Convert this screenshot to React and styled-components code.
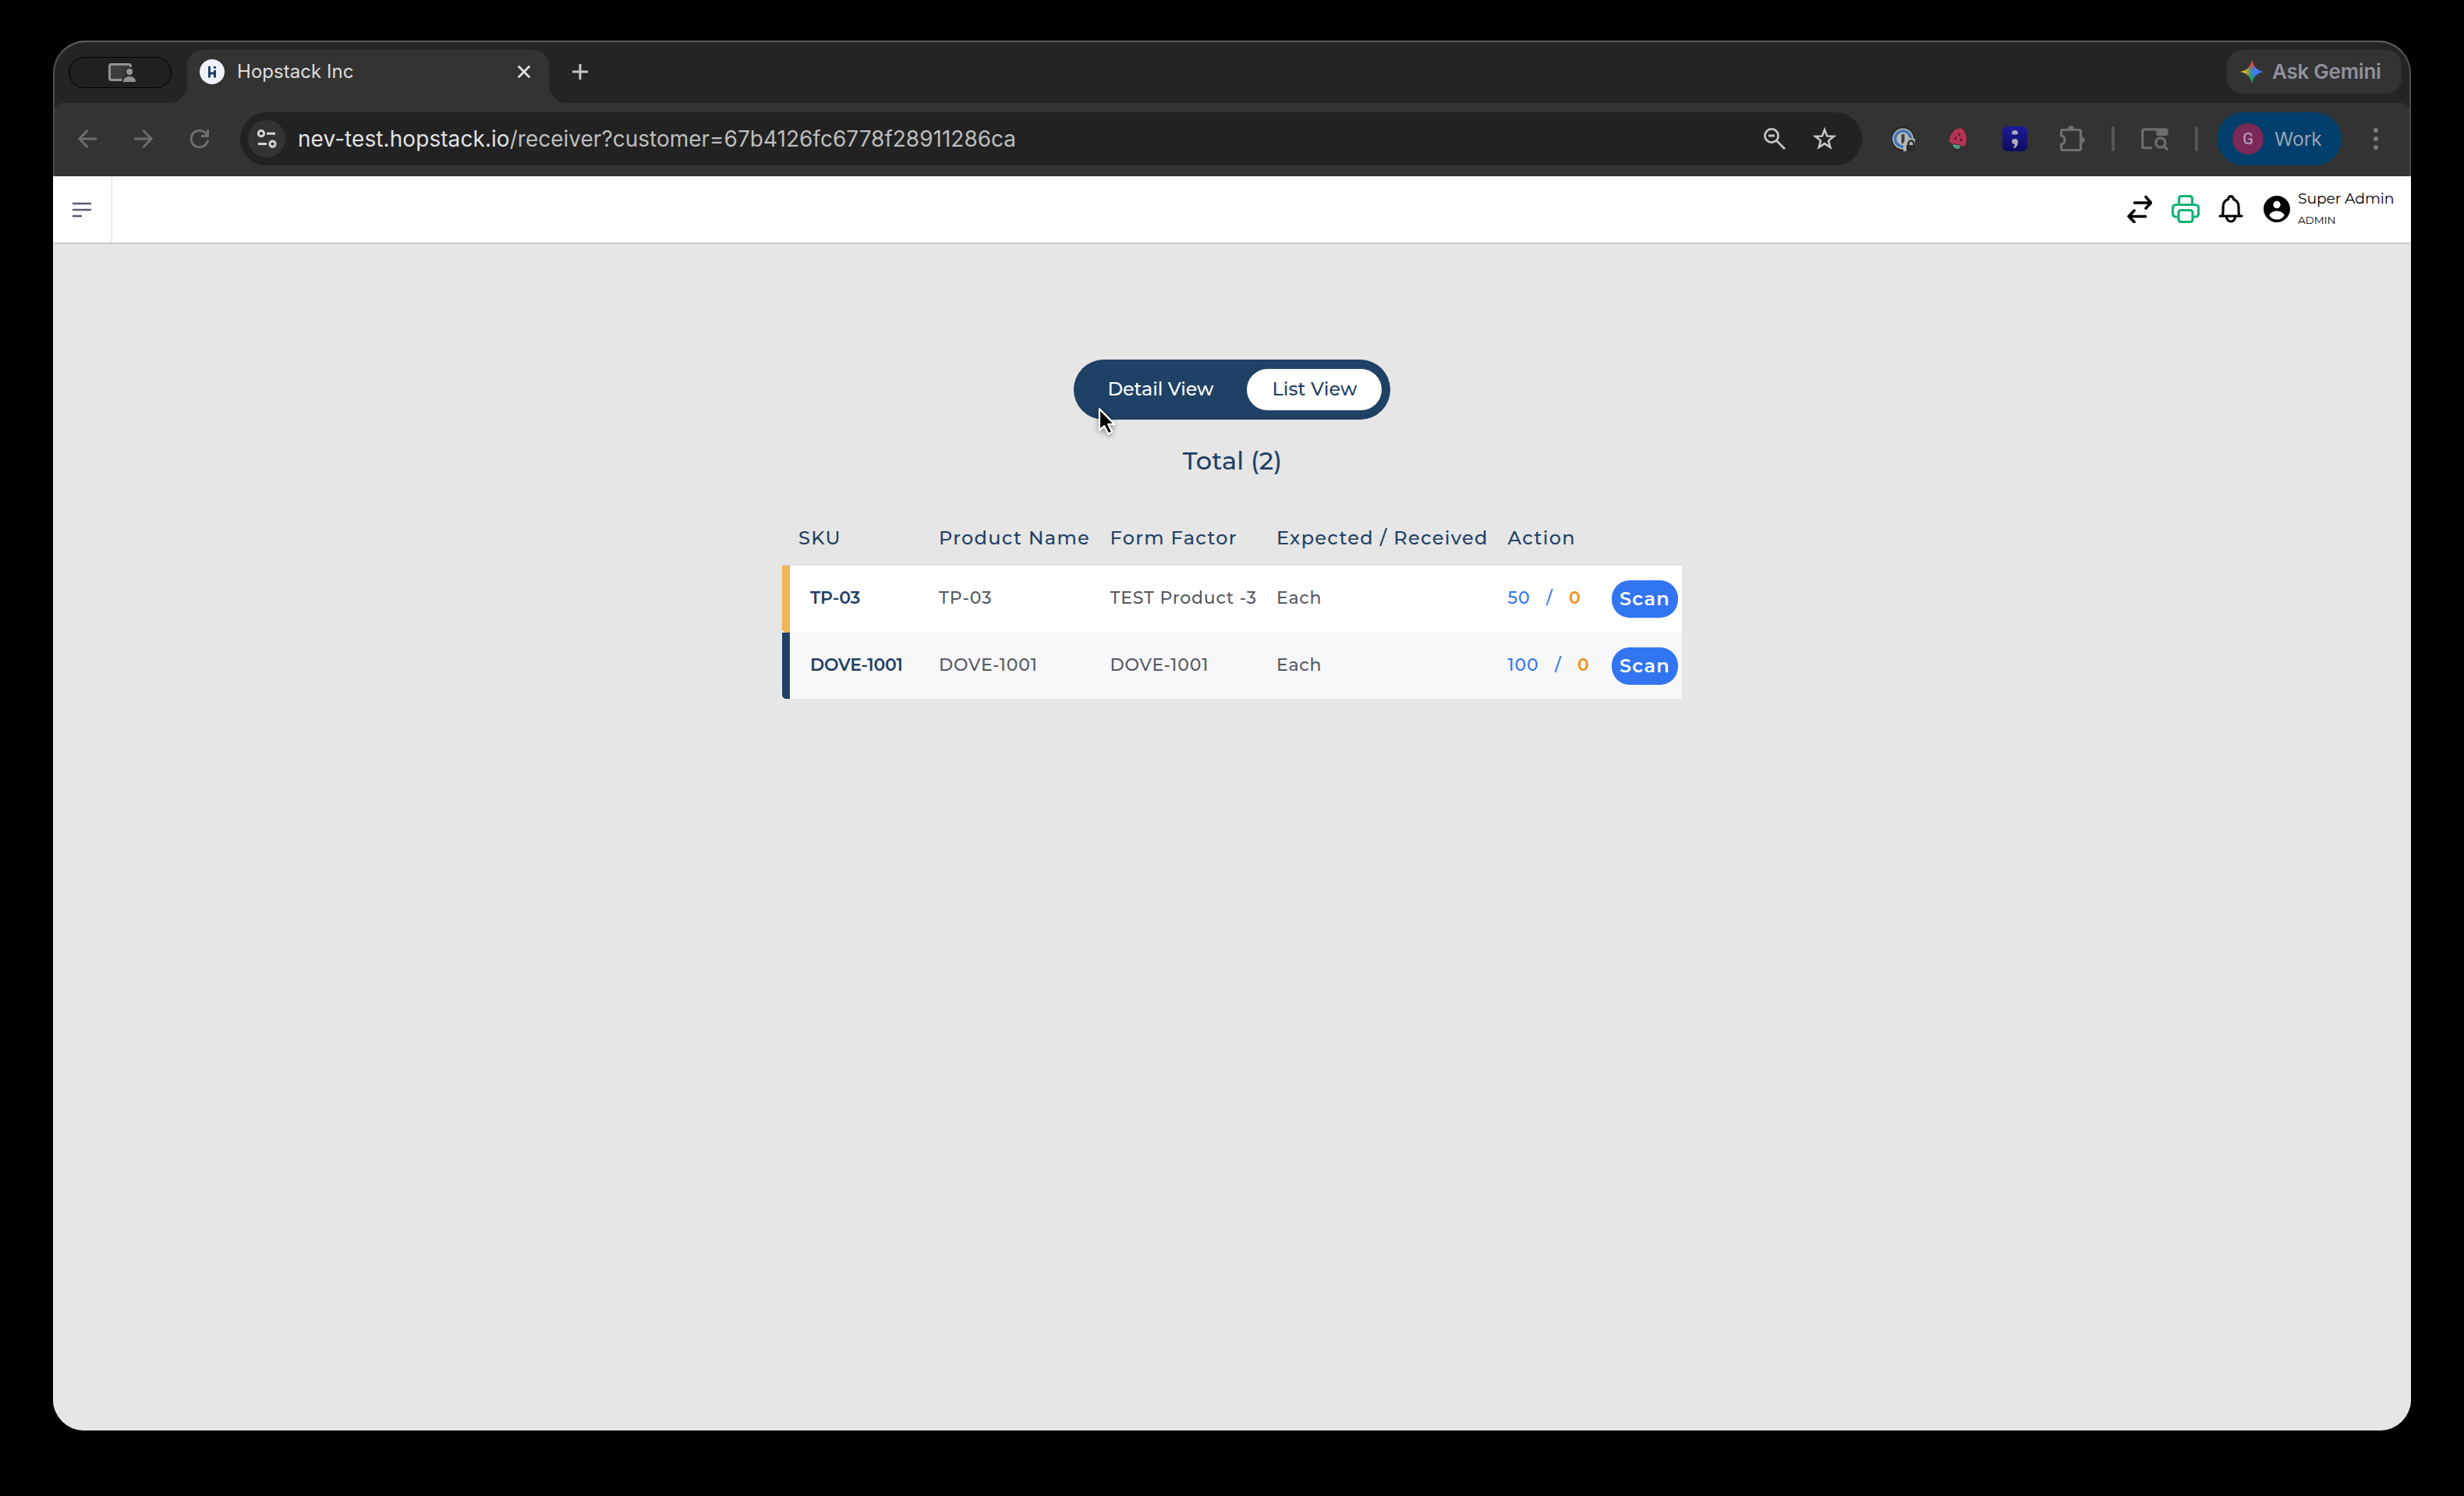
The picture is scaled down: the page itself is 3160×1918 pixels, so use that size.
import React from "react";
import styled, { createGlobalStyle } from "styled-components";

const Global = createGlobalStyle`
  * { box-sizing: border-box; }
  html, body { margin: 0; background: #000; }
  svg { display: block; flex: none; }
`;

const UI = `Inter, "Liberation Sans", sans-serif`;
const BRAND = `Montserrat, Inter, sans-serif`;

/* ---------- window ---------- */
const Desktop = styled.div`
  width: 3160px;
  height: 1918px;
  padding: 52px 68px 84px;
  background: #000;
  overflow: hidden;
`;
const Window = styled.div`
  height: 1782px;
  display: flex;
  flex-direction: column;
  border-radius: 42px 42px 40px 40px;
  overflow: hidden;
  background: #e6e6e6;
`;
const Chrome = styled.div`
  position: relative;
  height: 174px;
  flex: none;
  background: #242424;
  &::after {
    content: "";
    position: absolute;
    inset: 0;
    border: 2px solid #4b4b4b;
    border-top-color: #5c5c5c;
    border-bottom: 0;
    border-radius: 42px 42px 0 0;
    pointer-events: none;
  }
`;
const TabStrip = styled.div`
  height: 80px;
  display: flex;
  align-items: flex-start;
  padding: 12px 12px 0 20px;
`;
const SharePill = styled.div`
  width: 132px;
  height: 40px;
  margin: 9px 20px 0 0;
  border: 1px solid #000;
  border-radius: 20px;
  background: #202020;
  display: flex;
  align-items: center;
  justify-content: center;
  padding-left: 5px;
`;
const Tab = styled.div`
  position: relative;
  width: 464px;
  height: 68px;
  border-radius: 20px 20px 0 0;
  background: #333;
  display: flex;
  align-items: center;
  padding: 0 24px 12px 16px;
  &::before, &::after {
    content: "";
    position: absolute;
    bottom: 0;
    width: 24px;
    height: 24px;
  }
  &::before { left: -24px; background: radial-gradient(circle at 0 0, transparent 23.5px, #333 24.5px); }
  &::after { right: -24px; background: radial-gradient(circle at 100% 0, transparent 23.5px, #333 24.5px); }
`;
const TabTitle = styled.span`
  flex: 1;
  margin-left: 16px;
  font: 400 24px/30px ${UI};
  letter-spacing: 0.05px;
  color: #dedede;
`;
const NewTab = styled.div`
  margin: 18px 0 0 30px;
`;
const Gemini = styled.div`
  margin-left: auto;
  width: 224px;
  height: 56px;
  border-radius: 20px;
  background: #333;
  display: flex;
  align-items: center;
  padding: 0 0 1px 17px;
  gap: 11px;
  font: 600 26px/32px ${UI};
  letter-spacing: -0.25px;
  color: #90929c;
  white-space: nowrap;
`;

/* ---------- toolbar ---------- */
const Toolbar = styled.div`
  height: 94px;
  display: flex;
  align-items: center;
  padding: 0 0 2px 32px;
  background: #333;
  border-radius: 14px 14px 0 0;
`;
const NavIcons = styled.div`
  display: flex;
  gap: 48px;
`;
const Omnibox = styled.div`
  width: 2080px;
  height: 68px;
  margin-left: 40px;
  border-radius: 34px;
  background: #222;
  display: flex;
  align-items: center;
  padding: 0 33px 0 10px;
`;
const SiteInfo = styled.div`
  width: 48px;
  height: 48px;
  border-radius: 50%;
  background: #333;
  display: flex;
  align-items: center;
  justify-content: center;
`;
const Url = styled.div`
  flex: 1;
  margin-left: 16px;
  font: 400 28px/36px ${UI};
  letter-spacing: 0;
  color: #bebebe;
  white-space: nowrap;
`;
const Host = styled.span`
  letter-spacing: 0.07px;
  color: #e2e2e2;
`;
const Slot = styled.div`
  margin-left: ${(p) => p.$gap}px;
`;
const Divider = styled.div`
  width: 4px;
  height: 32px;
  border-radius: 2px;
  margin-left: 34px;
  background: #555;
`;
const Profile = styled.div`
  width: 160px;
  height: 68px;
  margin-left: 24px;
  border-radius: 34px;
  background: #003f6b;
  display: flex;
  align-items: center;
  padding-left: 20px;
  gap: 14px;
  font: 400 24.6px/36px ${UI};
  color: #99a4b2;
`;
const Avatar = styled.div`
  width: 40px;
  height: 40px;
  border-radius: 50%;
  background: #7b2958;
  color: #b9a9c0;
  font: 400 20px/40px Roboto, ${UI};
  text-align: center;
`;

/* ---------- app ---------- */
const Page = styled.div`
  flex: 1;
  background: #e6e6e6;
`;
const AppBar = styled.header`
  height: 85px;
  background: #fff;
  display: flex;
  align-items: center;
  box-shadow: 0 1px 2px rgba(0, 0, 0, 0.22);
`;
const MenuCell = styled.div`
  width: 76px;
  height: 85px;
  border-right: 1px solid #dcdcdc;
  display: flex;
  align-items: center;
  padding-left: 25px;
`;
const Actions = styled.div`
  margin-left: auto;
  display: flex;
  align-items: center;
  padding: 0 19px 1px 0;
`;
const User = styled.div`
  width: 126px;
  margin-left: 10px;
  padding-bottom: 2px;
  font-family: ${BRAND};
  color: #000;
  white-space: nowrap;
`;
const UserName = styled.div`
  font-size: 18.8px;
  line-height: 24px;
  font-weight: 400;
  letter-spacing: -0.1px;
`;
const UserRole = styled.div`
  margin-top: 6px;
  font-size: 13.5px;
  line-height: 18px;
  font-weight: 400;
  letter-spacing: -0.1px;
`;
const Main = styled.main`
  display: flex;
  flex-direction: column;
  align-items: center;
  padding-top: 150px;
`;
const Toggle = styled.div`
  position: relative;
  height: 77px;
  border-radius: 38.5px;
  background: #1f4165;
  display: flex;
  gap: 10px;
  padding: 12px 11px;
`;
const ToggleOption = styled.div`
  width: ${(p) => p.$width}px;
  height: 53px;
  border-radius: 26.5px;
  padding-left: 32.5px;
  font: 500 23.8px/51px ${BRAND};
  letter-spacing: ${(p) => (p.$active ? 0.12 : -0.05)}px;
  background: ${(p) => (p.$active ? "#fff" : "transparent")};
  color: ${(p) => (p.$active ? "#1f4165" : "#fff")};
`;
const Cursor = styled.svg`
  position: absolute;
  left: 30px;
  top: 59px;
  filter: drop-shadow(0 2px 3px rgba(0, 0, 0, 0.4));
`;
const Total = styled.h2`
  margin: 33px 0 0 1px;
  font: 500 32px/40px ${BRAND};
  letter-spacing: 0.1px;
  color: #1f4165;
`;
const Table = styled.div`
  width: 1154px;
  margin-top: 44px;
  font-family: ${BRAND};
  font-weight: 500;
  white-space: pre;
`;
const columns = `grid-template-columns: 201px 219.5px 213.5px 296.500px 1fr;`;
const HeadRow = styled.div`
  display: grid;
  ${columns}
  height: 70px;
  line-height: 69px;
  border-bottom: 1px solid #dadce4;
  font-size: 24px;
  letter-spacing: 1.3px;
  color: #1f4165;
`;
const Head = styled.div`
  padding-left: ${(p) => p.$indent || 0}px;
`;
const BodyRow = styled.div`
  display: grid;
  ${columns}
  align-items: center;
  height: ${(p) => p.$height}px;
  line-height: 26px;
  background: ${(p) => p.$bg};
  font-size: 22px;
  letter-spacing: 0.8px;
  color: #555a61;
`;
const SkuCell = styled.div`
  display: flex;
  align-items: center;
  height: 100%;
  gap: 26px;
  padding-bottom: ${(p) => p.$lift || 0}px;
  font-weight: 600;
  letter-spacing: -0.2px;
  color: #1f4165;
  border-left: 0;
`;
const Bar = styled.div`
  width: 10px;
  height: 100%;
  background: ${(p) => p.$color};
  border-bottom-left-radius: 5px;
`;
const Cell = styled.div`
  padding-bottom: 2px;
`;
const ActionCell = styled.div`
  display: flex;
  align-items: center;
  justify-content: space-between;
  padding-right: 5px;
`;
const Counts = styled.div`
  display: flex;
  gap: 20.5px;
  padding-bottom: 2px;
  color: #3275ee;
`;
const Received = styled.span`
  font-weight: 600;
  color: #f09114;
`;
const ScanButton = styled.button`
  width: 85px;
  height: 48px;
  padding: 0;
  border: 0;
  border-radius: 23px;
  background: #3275f1;
  color: #fff;
  font: 600 24px/48px ${BRAND};
  letter-spacing: 1.2px;
`;

/* ---------- icons ---------- */
const G = "#6e6e6e";
const ShareIcon = () => (
  <svg width="38" height="26" viewBox="0 0 38 26">
    <rect x="2.5" y="2.5" width="27" height="20" rx="2.5" fill="#3d3d3d" stroke="#929292" strokeWidth="3" />
    <path d="M18.5 26v-3c0-4 3-5 5-6-3-5-1-11 4.500-11H34v20z" fill="#242424" />
    <circle cx="28" cy="12" r="4.200" fill="#929292" />
    <path d="M20 25c0-4.500 3.500-7 8-7s8 2.500 8 7z" fill="#929292" />
  </svg>
);
const HopstackIcon = () => (
  <svg width="32" height="32" viewBox="0 0 32 32">
    <circle cx="16" cy="16" r="16" fill="#f1f1fc" />
    <path d="M11 9h3v7.500h4V14h3v9.500h-3v-4h-4v4h-3z" fill="#1c4068" />
    <circle cx="19.500" cy="10.500" r="1.700" fill="#1c4068" />
  </svg>
);
const GeminiIcon = () => (
  <svg width="30" height="30" viewBox="0 0 30 30">
    <defs>
      <linearGradient id="gmBase" x1="0" y1="0" x2="1" y2="0">
        <stop offset="0.42" stopColor="#4f8f7a" /><stop offset="0.6" stopColor="#3b7dfc" />
      </linearGradient>
      <radialGradient id="gmRed" gradientUnits="userSpaceOnUse" cx="14" cy="1" r="12">
        <stop offset="0.4" stopColor="#f5403f" /><stop offset="1" stopColor="#f5403f" stopOpacity="0" />
      </radialGradient>
      <radialGradient id="gmYellow" gradientUnits="userSpaceOnUse" cx="0" cy="15" r="13">
        <stop offset="0.4" stopColor="#f2b818" /><stop offset="1" stopColor="#f2b818" stopOpacity="0" />
      </radialGradient>
      <radialGradient id="gmGreen" gradientUnits="userSpaceOnUse" cx="14" cy="29" r="12">
        <stop offset="0.4" stopColor="#13a653" /><stop offset="1" stopColor="#13a653" stopOpacity="0" />
      </radialGradient>
    </defs>
    {["gmBase", "gmGreen", "gmYellow", "gmRed"].map((id) => (
      <path key={id} fill={`url(#${id})`} d="M15 0c1.500 8 6.500 13.500 15 15-8.500 1.500-13.500 7-15 15C13.500 22 8.500 16.500 0 15 8.500 13.500 13.500 8 15 0z" />
    ))}
  </svg>
);
const Svg = ({ w = 24, h = 24, c = G, sw = 2.5, children, ...r }) => (
  <svg width={w} height={h} viewBox={`0 0 ${w} ${h}`} fill="none" stroke={c} strokeWidth={sw} {...r}>{children}</svg>
);
const OnePassword = () => (
  <svg width="30" height="32" viewBox="0 0 30 32">
    <circle cx="14.500" cy="16" r="15.500" fill="#242424" />
    <circle cx="14.500" cy="16" r="13.500" fill="#b4b4b4" />
    <circle cx="14.500" cy="16" r="10" fill="#b9b9b9" stroke="#3f74b5" strokeWidth="3.500" />
    <rect x="12.500" y="10" width="4" height="12" rx="1" fill="#3c3c3c" />
    <path d="M15 32V21c2-5 8-7 15-5v16z" fill="#b4b4b4" />
    <path d="M19 24h11v8H19z" fill="#2b2b2b" />
    <path d="M21.500 25v-3a3.500 3.500 0 0 1 7 0v3" fill="none" stroke="#2b2b2b" strokeWidth="2.500" />
  </svg>
);
const Strawberry = () => (
  <svg width="26" height="32" viewBox="0 0 26 32">
    <path d="M15 1.500c5 0 9.500 7 9.500 14.500 0 6-2 10.500-5 10.500C13 26.500 1 22 1 18 1 14.500 7 1.500 15 1.500z" fill="#b33450" stroke="#282828" strokeWidth="1" />
    <path d="M5.500 25c1-3 4-3 6-1.500 3-1 5 0 5 2.500 0 2-1 3.500-2.500 3l-1.500 1-2-1.500-2 1-1-2.500z" fill="#539884" stroke="#282828" />
    <g stroke="#4a1525" strokeWidth="2.200" strokeLinecap="round">
      <path d="M15 9.800l-.3 1.200M10.300 14.500l-.6 1.500M16.600 16.500l.3 1.500" />
    </g>
  </svg>
);
const Semicolon = () => (
  <svg width="32" height="32" viewBox="0 0 32 32">
    <defs><linearGradient id="navy" x1="0" y1="0" x2="0" y2="1"><stop stopColor="#1c1a9c" /><stop offset="1" stopColor="#0e0c5c" /></linearGradient></defs>
    <path d="M4 0h24l4 4v24l-4 4H4l-4-4V4z" fill="url(#navy)" />
    <path d="M12 9c0-3 2-4 4-4s4 1 4 4c0 2-8 2-8 0zM12 19c0-2 2-3 4-3 3 0 4 2 4 4 0 4-2 7-5 8l-1-1.500c1.500-1 2-2 2-3.500-2.500 0-4-1.500-4-4z" fill="#adadb5" />
  </svg>
);
const Puzzle = () => (
  <svg width="33" height="34" viewBox="0 0 33 34">
    <path d="M4 5.500h21a2.500 2.500 0 0 1 2.500 2.500v21a2.500 2.500 0 0 1-2.500 2.500H4.500A2 2 0 0 1 2.500 29.500v-5.500c3-.5 4.500-2.500 4.500-5.500s-1.500-5-4.500-5.500V7A1.500 1.500 0 0 1 4 5.500z" fill="none" stroke={G} strokeWidth="3.200" />
    <path d="M11 5a4 4.500 0 0 1 8 0zM28 14.500a4.500 4 0 0 1 0 8z" fill={G} stroke={G} />
  </svg>
);
const SearchTabs = () => (
  <svg width="35" height="32" viewBox="0 0 36 32" fill="none" stroke={G} strokeWidth="3.200">
    <path d="M14 28H3.800a2 2 0 0 1-2-2V5.500a2 2 0 0 1 2-2H32a2 2 0 0 1 2 2V11" />
    <path d="M20 3h14v9H20z" fill={G} stroke="none" />
    <circle cx="25.500" cy="21" r="6.200" /><path d="M30 25.500l5 5" strokeWidth="3.400" />
  </svg>
);
const Swap = () => (
  <Svg w={32} h={36} c="#000" sw={3.6} strokeLinecap="round" strokeLinejoin="round">
    <path d="M9.500 10h20M24 2.500L30.500 10 24 17M23.500 27.500H2.500M9 20l-7 7.500L9 34.500" />
  </Svg>
);
const Printer = () => (
  <Svg w={36} h={36} c="#12b274" sw={3.2} strokeLinejoin="round">
    <path d="M9.500 12.500V4.500a3 3 0 0 1 3-3h11a3 3 0 0 1 3 3v8" />
    <path d="M9 28H5.500a4 4 0 0 1-4-4v-7.500a4 4 0 0 1 4-4h25a4 4 0 0 1 4 4V24a4 4 0 0 1-4 4H27" />
    <rect x="9" y="19.500" width="18" height="15" rx="3" />
  </Svg>
);
const Bell = () => (
  <Svg w={32} h={36} c="#000" sw={3.2} strokeLinejoin="round" strokeLinecap="round">
    <path d="M2 27h28M5 26.500c1-1.500 1-3 1-6V15c0-4.500 2.500-8 6.500-9.500C13 3 14 1.700 16 1.700S19 3 19.500 5.500C23.500 7 26 10.500 26 15v5.500c0 3 0 4.500 1 6" />
    <path d="M10.500 28a5.500 6 0 0 0 11 0" />
  </Svg>
);
const Account = () => (
  <svg width="34" height="34" viewBox="2 2 20 20">
    <path d="M12 2C6.480 2 2 6.480 2 12s4.480 10 10 10 10-4.480 10-10S17.520 2 12 2zm0 4c1.500 0 2.700 1.200 2.700 2.700s-1.200 2.700-2.700 2.700-2.700-1.200-2.700-2.700S10.500 6 12 6zm0 14c-2.200 0-4.400-1.200-5.700-3.300.6-1.900 3.500-3.200 5.700-3.200s5.100 1.300 5.700 3.200C16.400 18.800 14.200 20 12 20z" fill="#000" />
  </svg>
);

const rows = [
  { sku: "TP-03", product: "TP-03", form: "TEST Product -3", unit: "Each", expected: 50, received: 0, bar: "#efb655", bg: "#fff", height: 86 },
  { sku: "DOVE-1001", product: "DOVE-1001", form: "DOVE-1001", unit: "Each", expected: 100, received: 0, bar: "#1f4165", bg: "#f8f8fb", height: 85 },
];

export default function App() {
  return (
    <Desktop>
      <Global />
      <Window>
        <Chrome>
          <TabStrip>
            <SharePill><ShareIcon /></SharePill>
            <Tab>
              <HopstackIcon />
              <TabTitle>Hopstack Inc</TabTitle>
              <Svg w={16} h={16} c="#e0e0e0" sw={2.8} strokeLinecap="round"><path d="M1.500 1.500l13 13M14.500 1.500l-13 13" /></Svg>
            </Tab>
            <NewTab><Svg w={20} h={20} c="#c4c4c4" sw={3}><path d="M10 0v20M0 10h20" /></Svg></NewTab>
            <Gemini><GeminiIcon />Ask Gemini</Gemini>
          </TabStrip>
          <Toolbar>
            <NavIcons>
              <Svg sw={3}><path d="M24 12H2.500M12.500 1L1.800 12l10.700 11" /></Svg>
              <Svg sw={3}><path d="M0 12h21.500M11.500 1l10.700 11-10.700 11" /></Svg>
              <Svg sw={3}><path d="M22.500 13.500A10.700 10.700 0 1 1 19.500 4.500L22.500 8M22.500 0v8.500H14" /></Svg>
            </NavIcons>
            <Omnibox>
              <SiteInfo>
                <Svg w={26} h={26} c="#d6d6d6" sw={3}>
                  <circle cx="6" cy="6.200" r="3.600" /><path d="M13 6.200h11M2 19.600h11" /><circle cx="20.500" cy="19.600" r="3.600" />
                </Svg>
              </SiteInfo>
              <Url><Host>nev-test.hopstack.io</Host>/receiver?customer=67b4126fc6778f28911286ca</Url>
              <Svg w={28} h={28} c="#c4c4c4" sw={2.8}>
                <circle cx="10" cy="10" r="8.600" /><path d="M6 10h8M16.500 16.500L27 27" />
              </Svg>
              <Slot $gap={35}>
                <Svg w={30} h={30} c="#c8c8c8" sw={2.5}>
                  <path d="M15 3.200l3.100 8.200 8.700.5-6.800 5.500 2.300 8.500L15 21.100l-7.300 4.800 2.300-8.500-6.800-5.500 8.700-.5z" />
                </Svg>
              </Slot>
            </Omnibox>
            <Slot $gap={38}><OnePassword /></Slot>
            <Slot $gap={42}><Strawberry /></Slot>
            <Slot $gap={44}><Semicolon /></Slot>
            <Slot $gap={41}><Puzzle /></Slot>
            <Divider />
            <Slot $gap={34}><SearchTabs /></Slot>
            <Divider />
            <Profile><Avatar>G</Avatar>Work</Profile>
            <Slot $gap={41}>
              <svg width="6" height="28" viewBox="0 0 6 28" fill="#7c7c7c"><circle cx="3" cy="3" r="3" /><circle cx="3" cy="14" r="3" /><circle cx="3" cy="25" r="3" /></svg>
            </Slot>
          </Toolbar>
        </Chrome>
        <Page>
          <AppBar>
            <MenuCell>
              <Svg w={24} h={20} c="#5a5d6e" sw={2.6}><path d="M0 2h24M0 10h24M0 18h12" /></Svg>
            </MenuCell>
            <Actions>
              <Swap />
              <Slot $gap={25}><Printer /></Slot>
              <Slot $gap={24}><Bell /></Slot>
              <Slot $gap={26}><Account /></Slot>
              <User>
                <UserName>Super Admin</UserName>
                <UserRole>ADMIN</UserRole>
              </User>
            </Actions>
          </AppBar>
          <Main>
            <Toggle>
              <ToggleOption $width={201}>Detail View</ToggleOption>
              <ToggleOption $width={173} $active>List View</ToggleOption>
              <Cursor width="28" height="42" viewBox="0 0 26 40">
                <path d="M2.500 4v26l6-5 4.800 9.500 4.700-2.300-4.800-9.500h7.800z" fill="#000" stroke="#fff" strokeWidth="2.200" strokeLinejoin="round" />
              </Cursor>
            </Toggle>
            <Total>Total (2)</Total>
            <Table>
              <HeadRow>
                <Head $indent={21}>SKU</Head>
                <Head>Product Name</Head>
                <Head>Form Factor</Head>
                <Head>Expected / Received</Head>
                <Head>Action</Head>
              </HeadRow>
              {rows.map((r) => (
                <BodyRow key={r.sku} $bg={r.bg} $height={r.height}>
                  <SkuCell>
                    <Bar $color={r.bar} />
                    <Cell>{r.sku}</Cell>
                  </SkuCell>
                  <Cell>{r.product}</Cell>
                  <Cell>{r.form}</Cell>
                  <Cell>{r.unit}</Cell>
                  <ActionCell>
                    <Counts><span>{r.expected}</span><span>/</span><Received>{r.received}</Received></Counts>
                    <ScanButton>Scan</ScanButton>
                  </ActionCell>
                </BodyRow>
              ))}
            </Table>
          </Main>
        </Page>
      </Window>
    </Desktop>
  );
}
